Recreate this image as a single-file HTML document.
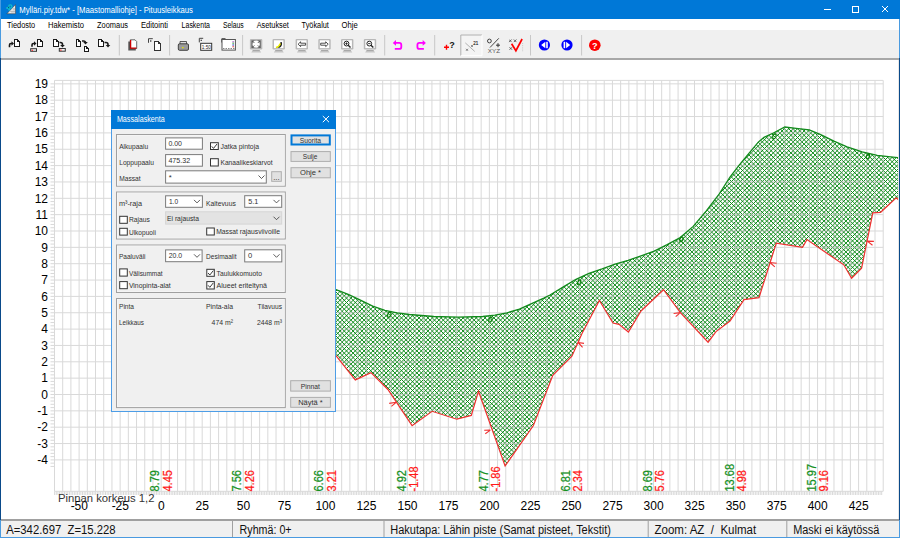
<!DOCTYPE html><html><head><meta charset="utf-8"><style>
html,body{margin:0;padding:0;width:900px;height:538px;overflow:hidden;background:#fff}
svg{display:block;font-family:"Liberation Sans", sans-serif}
</style></head><body>
<svg width="900" height="538" viewBox="0 0 900 538">
<defs>

<clipPath id="chartclip"><rect x="1" y="60" width="897" height="459"/></clipPath>
</defs>

<rect x="0" y="0" width="900" height="538" fill="#ffffff"/>
<rect x="0" y="0" width="900" height="19" fill="#0078d7"/>
<rect x="0" y="19" width="900" height="11" fill="#ffffff"/>
<rect x="0" y="30" width="900" height="28" fill="#f0f0f0"/>
<rect x="0" y="58" width="900" height="2" fill="#a8a8a8"/>
<rect x="0" y="519" width="900" height="2" fill="#a0a0a0"/>
<rect x="0" y="521" width="900" height="16" fill="#f0f0f0"/>
<rect x="0" y="537" width="900" height="1" fill="#4a9ae0"/>
<rect x="0" y="0" width="1" height="58" fill="#4a9be0"/>
<rect x="0" y="58" width="1" height="462" fill="#0a4a8a"/>
<rect x="0" y="520" width="1" height="18" fill="#4a9be0"/>
<rect x="899" y="19" width="1" height="39" fill="#4a9be0"/>
<rect x="899" y="58" width="1" height="462" fill="#0a4a8a"/>
<rect x="899" y="520" width="1" height="18" fill="#4a9be0"/>
<rect x="898" y="60" width="1" height="459" fill="#e8e8e8"/>
<path d="M6.9 13.7 L15.5 4.6 L15.5 13.7 Z" fill="#ececec" stroke="#333" stroke-width="0.5"/><path d="M10 11.5 H15 M12.5 9 H15 M12 13.5 V10.5 M14 13.5 V8" stroke="#999" stroke-width="0.5"/>
<circle cx="10.3" cy="6.5" r="1.6" fill="none" stroke="#12c0c8" stroke-width="1.2"/><circle cx="7.3" cy="8" r="1.1" fill="#12c0c8"/><circle cx="9.2" cy="9.6" r="1.1" fill="#12c0c8"/><circle cx="8.6" cy="7.4" r="0.6" fill="#0a5a70"/>
<text x="19.3" y="12.8" font-size="8.8" fill="#ffffff" text-anchor="start" textLength="173.6" lengthAdjust="spacingAndGlyphs">Mylläri.piy.tdw* - [Maastomalliohje] - Pituusleikkaus</text>
<rect x="824" y="9" width="7" height="1" fill="#ffffff"/>
<rect x="852.5" y="6.5" width="6" height="6" fill="none" stroke="#ffffff" stroke-width="1"/>
<path d="M882 6 L888 12 M888 6 L882 12" stroke="#fff" stroke-width="1"/>
<text x="7.0" y="28.4" font-size="8.9" fill="#000" text-anchor="start" textLength="28.2" lengthAdjust="spacingAndGlyphs">Tiedosto</text>
<text x="48.0" y="28.4" font-size="8.9" fill="#000" text-anchor="start" textLength="36.0" lengthAdjust="spacingAndGlyphs">Hakemisto</text>
<text x="97.0" y="28.4" font-size="8.9" fill="#000" text-anchor="start" textLength="31.0" lengthAdjust="spacingAndGlyphs">Zoomaus</text>
<text x="141.0" y="28.4" font-size="8.9" fill="#000" text-anchor="start" textLength="27.0" lengthAdjust="spacingAndGlyphs">Editointi</text>
<text x="181.6" y="28.4" font-size="8.9" fill="#000" text-anchor="start" textLength="28.4" lengthAdjust="spacingAndGlyphs">Laskenta</text>
<text x="222.9" y="28.4" font-size="8.9" fill="#000" text-anchor="start" textLength="20.9" lengthAdjust="spacingAndGlyphs">Selaus</text>
<text x="256.7" y="28.4" font-size="8.9" fill="#000" text-anchor="start" textLength="32.2" lengthAdjust="spacingAndGlyphs">Asetukset</text>
<text x="301.6" y="28.4" font-size="8.9" fill="#000" text-anchor="start" textLength="27.3" lengthAdjust="spacingAndGlyphs">Työkalut</text>
<text x="341.6" y="28.4" font-size="8.9" fill="#000" text-anchor="start" textLength="16.2" lengthAdjust="spacingAndGlyphs">Ohje</text>
<rect x="118.8" y="35" width="1" height="20.5" fill="#c8c8c8"/>
<rect x="169.1" y="35" width="1" height="20.5" fill="#c8c8c8"/>
<rect x="242.1" y="35" width="1" height="20.5" fill="#c8c8c8"/>
<rect x="384.2" y="35" width="1" height="20.5" fill="#c8c8c8"/>
<rect x="434.2" y="35" width="1" height="20.5" fill="#c8c8c8"/>
<rect x="530.0" y="35" width="1" height="20.5" fill="#c8c8c8"/>
<rect x="581.1" y="35" width="1" height="20.5" fill="#c8c8c8"/>
<path d="M9.5 47.2 V45.0 Q9.5 43.5 11.0 43.5 H12" stroke="#1a1a1a" stroke-width="1.6" fill="none"/>
<path d="M11.5 41.3 L14 43.5 L11.5 45.7 Z" fill="#1a1a1a"/>
<path d="M14.5 39.5 H17.5 L19.5 41.5 V46.5 H14.5 Z" fill="#ffffff" stroke="#1a1a1a" stroke-width="1" shape-rendering="crispEdges"/><path d="M17.5 39.5 V41.5 H19.5" stroke="#1a1a1a" stroke-width="1" fill="none" shape-rendering="crispEdges"/>
<path d="M32 46.8 V45.0 Q32 43.5 33.5 43.5 H34.5" stroke="#1a1a1a" stroke-width="1.6" fill="none"/>
<path d="M34.0 41.3 L36.5 43.5 L34.0 45.7 Z" fill="#1a1a1a"/>
<path d="M37.5 39.5 H40.5 L42.5 41.5 V46.5 H37.5 Z" fill="#ffffff" stroke="#1a1a1a" stroke-width="1" shape-rendering="crispEdges"/><path d="M40.5 39.5 V41.5 H42.5" stroke="#1a1a1a" stroke-width="1" fill="none" shape-rendering="crispEdges"/>
<rect x="30.7" y="48.7" width="5.800000000000001" height="2.5999999999999943" fill="#f4f4f4" stroke="#333" stroke-width="1"/>
<rect x="31.7" y="49.7" width="1.2" height="1.2" fill="#ff2020"/>
<path d="M53.5 39.5 H56.5 L58.5 41.5 V46.5 H53.5 Z" fill="#ffffff" stroke="#1a1a1a" stroke-width="1" shape-rendering="crispEdges"/><path d="M56.5 39.5 V41.5 H58.5" stroke="#1a1a1a" stroke-width="1" fill="none" shape-rendering="crispEdges"/>
<path d="M59.5 42.5 H60.5 Q62.5 42.5 62.5 44.5 V45.5" stroke="#1a1a1a" stroke-width="1.6" fill="none"/>
<path d="M60.2 45.0 L62.5 47.5 L64.8 45.0 Z" fill="#1a1a1a"/>
<rect x="59.3" y="48.5" width="6.0" height="2.700000000000003" fill="#f4f4f4" stroke="#333" stroke-width="1"/>
<rect x="60.3" y="49.5" width="1.2" height="1.2" fill="#ff2020"/>
<path d="M76.5 39.5 H78.5 L80.5 41.5 V46.5 H76.5 Z" fill="#ffffff" stroke="#1a1a1a" stroke-width="1" shape-rendering="crispEdges"/><path d="M78.5 39.5 V41.5 H80.5" stroke="#1a1a1a" stroke-width="1" fill="none" shape-rendering="crispEdges"/>
<path d="M82 41 H83.5 Q85.5 41 85.5 43 V42.5" stroke="#1a1a1a" stroke-width="1.6" fill="none"/>
<path d="M83.2 42.0 L85.5 44.5 L87.8 42.0 Z" fill="#1a1a1a"/>
<path d="M84.5 46.5 H86.5 L88.5 48.5 V51.5 H84.5 Z" fill="#ffffff" stroke="#1a1a1a" stroke-width="1" shape-rendering="crispEdges"/><path d="M86.5 46.5 V48.5 H88.5" stroke="#1a1a1a" stroke-width="1" fill="none" shape-rendering="crispEdges"/>
<path d="M98.5 39.5 H101.5 L103.5 41.5 V46.5 H98.5 Z" fill="#ffffff" stroke="#1a1a1a" stroke-width="1" shape-rendering="crispEdges"/><path d="M101.5 39.5 V41.5 H103.5" stroke="#1a1a1a" stroke-width="1" fill="none" shape-rendering="crispEdges"/>
<path d="M104.5 42.5 H106 Q108 42.5 108 44.5 V45.5" stroke="#1a1a1a" stroke-width="1.6" fill="none"/>
<path d="M105.7 45.0 L108 47.5 L110.3 45.0 Z" fill="#1a1a1a"/>
<rect x="128.3" y="41.5" width="7.5" height="9" fill="#555"/>
<path d="M130.3 39.8 H135 L136.7 41.5 V48.5 H130.3 Z" fill="#fff" stroke="#444" stroke-width="0.8"/>
<path d="M130.6 40 V48.2 H136.5" stroke="#cc0000" stroke-width="1.3" fill="none"/>
<path d="M148.5 42.8 V38.7 H152.8" stroke="#444" stroke-width="1" fill="none"/><rect x="150" y="40.3" width="1.4" height="1.4" fill="#444"/>
<path d="M154.5 41.5 H158.5 L160.5 43.5 V50.5 H154.5 Z" fill="#fff" stroke="#333" stroke-width="1" shape-rendering="crispEdges"/><path d="M158.5 41.5 V43.5 H160.5" stroke="#333" stroke-width="1" fill="none" shape-rendering="crispEdges"/>
<path d="M180 44 V41.5 H186.5 V44" fill="#ddd" stroke="#333" stroke-width="0.8"/>
<path d="M178.3 45 Q178.3 43.8 179.5 43.8 H187.3 Q188.5 43.8 188.5 45 V49 Q188.5 50.3 187.2 50.3 H179.5 Q178.3 50.3 178.3 49 Z" fill="#9a9a9a" stroke="#333" stroke-width="0.9"/>
<rect x="182" y="47" width="1.6" height="1.2" fill="#e0e000"/>
<path d="M199.3 42.4 V38.3 H203.2" stroke="#444" stroke-width="1" fill="none"/><rect x="200.6" y="39.7" width="1.3" height="1.3" fill="#444"/>
<rect x="200.7" y="43.3" width="11" height="7" fill="#fff" stroke="#333" stroke-width="1"/>
<text x="201.8" y="49.3" font-size="5.6" fill="#222" textLength="9" lengthAdjust="spacingAndGlyphs">1:50</text>
<path d="M221.8 42.5 V38.7 H225.5" stroke="#444" stroke-width="1" fill="none"/><rect x="223" y="40" width="1.4" height="1.4" fill="#444"/>
<rect x="222" y="39.5" width="13.4" height="10.6" fill="#fff" stroke="#555" stroke-width="1"/>
<rect x="232.6" y="41" width="1" height="1.6" fill="#a040c0"/><rect x="232.6" y="42.6" width="1" height="1.6" fill="#20a020"/><rect x="232.6" y="44.2" width="1" height="1.6" fill="#2040e0"/><rect x="232.6" y="45.8" width="1" height="1.6" fill="#e02020"/>
<path d="M223 48.5 H235" stroke="#888" stroke-width="1" stroke-dasharray="1.5 1"/>
<rect x="249.9" y="38.9" width="12.4" height="10.6" rx="1.2" fill="#b8b8b8"/>
<rect x="251.4" y="40.3" width="9.4" height="7.8" fill="#6a6a6a"/>
<path d="M251.2 52.6 H261.2 L259.7 50.2 H252.7 Z" fill="#c4c4c4"/><rect x="252.7" y="50" width="7" height="1" fill="#a8a8a8"/>
<circle cx="256.1" cy="44.2" r="3.6" fill="#fff"/><path d="M252.4 41 l2 2 M259.8 41 l-2 2 M252.4 47.4 l2 -2 M259.8 47.4 l-2 -2" stroke="#555" stroke-width="0.9"/>
<rect x="272.5" y="38.9" width="12.4" height="10.6" rx="1.2" fill="#b8b8b8"/>
<rect x="274.0" y="40.3" width="9.4" height="7.8" fill="#ffffff"/>
<path d="M273.8 52.6 H283.8 L282.3 50.2 H275.3 Z" fill="#c4c4c4"/><rect x="275.3" y="50" width="7" height="1" fill="#a8a8a8"/>
<path d="M275.5 47.8 Q279 47.8 280 44.5 L280.5 42 L282 42.3 Q282.5 46.5 279.5 47.8 Z" fill="#222"/><path d="M276 47.5 Q279 47 280.4 43.5" stroke="#e8e800" stroke-width="1.5" fill="none"/>
<rect x="295.6" y="38.9" width="12.4" height="10.6" rx="1.2" fill="#b8b8b8"/>
<rect x="297.1" y="40.3" width="9.4" height="7.8" fill="#ffffff"/>
<path d="M296.9 52.6 H306.9 L305.4 50.2 H298.4 Z" fill="#c4c4c4"/><rect x="298.4" y="50" width="7" height="1" fill="#a8a8a8"/>
<path d="M298.1 44.2 L300.6 41.8 V43.2 H305.6 V45.2 H300.6 V46.6 Z" fill="#fff" stroke="#222" stroke-width="0.8"/>
<rect x="318.3" y="38.9" width="12.4" height="10.6" rx="1.2" fill="#b8b8b8"/>
<rect x="319.8" y="40.3" width="9.4" height="7.8" fill="#ffffff"/>
<path d="M319.6 52.6 H329.6 L328.1 50.2 H321.1 Z" fill="#c4c4c4"/><rect x="321.1" y="50" width="7" height="1" fill="#a8a8a8"/>
<path d="M328.2 44.2 L325.7 41.8 V43.2 H320.7 V45.2 H325.7 V46.6 Z" fill="#fff" stroke="#222" stroke-width="0.8"/>
<rect x="341.0" y="38.9" width="12.4" height="10.6" rx="1.2" fill="#b8b8b8"/>
<rect x="342.5" y="40.3" width="9.4" height="7.8" fill="#ffffff"/>
<path d="M342.3 52.6 H352.3 L350.8 50.2 H343.8 Z" fill="#c4c4c4"/><rect x="343.8" y="50" width="7" height="1" fill="#a8a8a8"/>
<circle cx="346.5" cy="43.6" r="2.4" fill="#fff" stroke="#222" stroke-width="1"/><path d="M348.2 45.3 L350.5 47.6" stroke="#222" stroke-width="1.4"/><path d="M345.3 43.6 H347.7 M346.5 42.4 V44.8" stroke="#222" stroke-width="0.9"/>
<rect x="363.8" y="38.9" width="12.4" height="10.6" rx="1.2" fill="#b8b8b8"/>
<rect x="365.3" y="40.3" width="9.4" height="7.8" fill="#ffffff"/>
<path d="M365.1 52.6 H375.1 L373.6 50.2 H366.6 Z" fill="#c4c4c4"/><rect x="366.6" y="50" width="7" height="1" fill="#a8a8a8"/>
<circle cx="369.3" cy="43.6" r="2.4" fill="#fff" stroke="#222" stroke-width="1"/><path d="M371.0 45.3 L373.3 47.6" stroke="#222" stroke-width="1.4"/><path d="M368.1 43.6 H370.5" stroke="#222" stroke-width="0.9"/>
<path d="M395 42.9 H399.3 Q401.3 42.9 401.3 44.9 V46.9 Q401.3 48.9 399.3 48.9 H394.8" stroke="#ff00ff" stroke-width="1.8" fill="none"/><path d="M392.8 42.9 L396 40 V45.8 Z" fill="#ff00ff"/>
<path d="M423.7 42.9 H419.4 Q417.4 42.9 417.4 44.9 V46.9 Q417.4 48.9 419.4 48.9 H423.9" stroke="#ff00ff" stroke-width="1.8" fill="none"/><path d="M425.9 42.9 L422.7 40 V45.8 Z" fill="#ff00ff"/>
<path d="M444 47.3 H449 M446.5 44.8 V49.8" stroke="#ff0000" stroke-width="1.4"/>
<text x="449.2" y="47.8" font-size="9" font-weight="bold" fill="#111">?</text>
<rect x="460.3" y="34.5" width="21.7" height="21.2" fill="#f4f4f4"/><path d="M460.8 55.7 V35 H482" stroke="#b0b0b0" stroke-width="1" fill="none"/><path d="M482 35 V55.7 H460.8" stroke="#ffffff" stroke-width="1" fill="none"/>
<path d="M465.3 42.9 L474.7 51.4" stroke="#a0a0a0" stroke-width="0.8"/><path d="M466 48.8 l2 2 M468 48.8 l-2 2" stroke="#555" stroke-width="0.7"/><rect x="471.3" y="45.3" width="1.4" height="1.4" fill="#333"/><text x="473.2" y="44.5" font-size="5.6" fill="#222" stroke="#222" stroke-width="0.15" textLength="5" lengthAdjust="spacingAndGlyphs">21</text>
<circle cx="489.4" cy="41" r="1.9" fill="none" stroke="#333" stroke-width="0.9"/><path d="M490 47.5 L498.8 38.3" stroke="#333" stroke-width="0.9"/><path d="M496 45.2 H500 M498 43.2 V47.2" stroke="#333" stroke-width="1"/>
<text x="487.8" y="52.6" font-size="4.8" fill="#555" textLength="12.2" lengthAdjust="spacingAndGlyphs">XYZ</text>
<path d="M509 39.5 l2.6 2.6 M511.6 39.5 l-2.6 2.6 M513.8 39.5 l2.6 2.6 M516.4 39.5 l-2.6 2.6 M509.5 47.2 l2.6 2.6 M512.1 47.2 l-2.6 2.6" stroke="#444" stroke-width="0.8"/>
<path d="M511.6 43.7 L515.9 50.7 L522.1 39" stroke="#ff0000" stroke-width="1.7" fill="none"/><path d="M522.6 43 V52" stroke="#bbb" stroke-width="0.8" stroke-dasharray="1 1.2"/>
<circle cx="544.4" cy="45" r="5.6" fill="#0000ff"/><path d="M541.2 45 L545.3 41.8 V48.2 Z" fill="#fff"/><rect x="546.2" y="41.8" width="1.6" height="6.4" fill="#fff"/>
<circle cx="567" cy="45" r="5.6" fill="#0000ff"/><path d="M570.2 45 L566.1 41.8 V48.2 Z" fill="#fff"/><rect x="563.6" y="41.8" width="1.6" height="6.4" fill="#fff"/>
<circle cx="594.8" cy="45.2" r="5.8" fill="#ff0000"/><text x="594.8" y="48.8" font-size="9" font-weight="bold" fill="#fff" text-anchor="middle">?</text>
<g clip-path="url(#chartclip)">
<path d="M54.50 80.4V491.3M62.70 80.4V491.3M70.91 80.4V491.3M79.12 80.4V491.3M87.32 80.4V491.3M95.53 80.4V491.3M103.73 80.4V491.3M111.94 80.4V491.3M120.14 80.4V491.3M128.34 80.4V491.3M136.55 80.4V491.3M144.75 80.4V491.3M152.96 80.4V491.3M161.17 80.4V491.3M169.37 80.4V491.3M177.57 80.4V491.3M185.78 80.4V491.3M193.99 80.4V491.3M202.19 80.4V491.3M210.40 80.4V491.3M218.60 80.4V491.3M226.81 80.4V491.3M235.01 80.4V491.3M243.22 80.4V491.3M251.42 80.4V491.3M259.62 80.4V491.3M267.83 80.4V491.3M276.03 80.4V491.3M284.24 80.4V491.3M292.44 80.4V491.3M300.65 80.4V491.3M308.86 80.4V491.3M317.06 80.4V491.3M325.26 80.4V491.3M333.47 80.4V491.3M341.68 80.4V491.3M349.88 80.4V491.3M358.08 80.4V491.3M366.29 80.4V491.3M374.50 80.4V491.3M382.70 80.4V491.3M390.91 80.4V491.3M399.11 80.4V491.3M407.31 80.4V491.3M415.52 80.4V491.3M423.73 80.4V491.3M431.93 80.4V491.3M440.13 80.4V491.3M448.34 80.4V491.3M456.55 80.4V491.3M464.75 80.4V491.3M472.95 80.4V491.3M481.16 80.4V491.3M489.37 80.4V491.3M497.57 80.4V491.3M505.77 80.4V491.3M513.98 80.4V491.3M522.18 80.4V491.3M530.39 80.4V491.3M538.60 80.4V491.3M546.80 80.4V491.3M555.00 80.4V491.3M563.21 80.4V491.3M571.41 80.4V491.3M579.62 80.4V491.3M587.83 80.4V491.3M596.03 80.4V491.3M604.24 80.4V491.3M612.44 80.4V491.3M620.64 80.4V491.3M628.85 80.4V491.3M637.05 80.4V491.3M645.26 80.4V491.3M653.47 80.4V491.3M661.67 80.4V491.3M669.88 80.4V491.3M678.08 80.4V491.3M686.28 80.4V491.3M694.49 80.4V491.3M702.70 80.4V491.3M710.90 80.4V491.3M719.11 80.4V491.3M727.31 80.4V491.3M735.51 80.4V491.3M743.72 80.4V491.3M751.92 80.4V491.3M760.13 80.4V491.3M768.34 80.4V491.3M776.54 80.4V491.3M784.75 80.4V491.3M792.95 80.4V491.3M801.15 80.4V491.3M809.36 80.4V491.3M817.57 80.4V491.3M825.77 80.4V491.3M833.98 80.4V491.3M842.18 80.4V491.3M850.38 80.4V491.3M858.59 80.4V491.3M866.79 80.4V491.3M875.00 80.4V491.3M883.21 80.4V491.3M54.5 459.90H883.2M54.5 443.55H883.2M54.5 427.20H883.2M54.5 410.85H883.2M54.5 394.50H883.2M54.5 378.15H883.2M54.5 361.80H883.2M54.5 345.45H883.2M54.5 329.10H883.2M54.5 312.75H883.2M54.5 296.40H883.2M54.5 280.05H883.2M54.5 263.70H883.2M54.5 247.35H883.2M54.5 231.00H883.2M54.5 214.65H883.2M54.5 198.30H883.2M54.5 181.95H883.2M54.5 165.60H883.2M54.5 149.25H883.2M54.5 132.90H883.2M54.5 116.55H883.2M54.5 100.20H883.2M54.5 83.85H883.2M54.5 80.4H883.2M54.5 491.3H883.2" stroke="#d9d9d9" stroke-width="1" fill="none"/>
<path d="M50.5 83.85H54.5M50.5 87.12H54.5M50.5 90.39H54.5M50.5 93.66H54.5M50.5 96.93H54.5M50.5 100.20H54.5M50.5 103.47H54.5M50.5 106.74H54.5M50.5 110.01H54.5M50.5 113.28H54.5M50.5 116.55H54.5M50.5 119.82H54.5M50.5 123.09H54.5M50.5 126.36H54.5M50.5 129.63H54.5M50.5 132.90H54.5M50.5 136.17H54.5M50.5 139.44H54.5M50.5 142.71H54.5M50.5 145.98H54.5M50.5 149.25H54.5M50.5 152.52H54.5M50.5 155.79H54.5M50.5 159.06H54.5M50.5 162.33H54.5M50.5 165.60H54.5M50.5 168.87H54.5M50.5 172.14H54.5M50.5 175.41H54.5M50.5 178.68H54.5M50.5 181.95H54.5M50.5 185.22H54.5M50.5 188.49H54.5M50.5 191.76H54.5M50.5 195.03H54.5M50.5 198.30H54.5M50.5 201.57H54.5M50.5 204.84H54.5M50.5 208.11H54.5M50.5 211.38H54.5M50.5 214.65H54.5M50.5 217.92H54.5M50.5 221.19H54.5M50.5 224.46H54.5M50.5 227.73H54.5M50.5 231.00H54.5M50.5 234.27H54.5M50.5 237.54H54.5M50.5 240.81H54.5M50.5 244.08H54.5M50.5 247.35H54.5M50.5 250.62H54.5M50.5 253.89H54.5M50.5 257.16H54.5M50.5 260.43H54.5M50.5 263.70H54.5M50.5 266.97H54.5M50.5 270.24H54.5M50.5 273.51H54.5M50.5 276.78H54.5M50.5 280.05H54.5M50.5 283.32H54.5M50.5 286.59H54.5M50.5 289.86H54.5M50.5 293.13H54.5M50.5 296.40H54.5M50.5 299.67H54.5M50.5 302.94H54.5M50.5 306.21H54.5M50.5 309.48H54.5M50.5 312.75H54.5M50.5 316.02H54.5M50.5 319.29H54.5M50.5 322.56H54.5M50.5 325.83H54.5M50.5 329.10H54.5M50.5 332.37H54.5M50.5 335.64H54.5M50.5 338.91H54.5M50.5 342.18H54.5M50.5 345.45H54.5M50.5 348.72H54.5M50.5 351.99H54.5M50.5 355.26H54.5M50.5 358.53H54.5M50.5 361.80H54.5M50.5 365.07H54.5M50.5 368.34H54.5M50.5 371.61H54.5M50.5 374.88H54.5M50.5 378.15H54.5M50.5 381.42H54.5M50.5 384.69H54.5M50.5 387.96H54.5M50.5 391.23H54.5M50.5 394.50H54.5M50.5 397.77H54.5M50.5 401.04H54.5M50.5 404.31H54.5M50.5 407.58H54.5M50.5 410.85H54.5M50.5 414.12H54.5M50.5 417.39H54.5M50.5 420.66H54.5M50.5 423.93H54.5M50.5 427.20H54.5M50.5 430.47H54.5M50.5 433.74H54.5M50.5 437.01H54.5M50.5 440.28H54.5M50.5 443.55H54.5M50.5 446.82H54.5M50.5 450.09H54.5M50.5 453.36H54.5M50.5 456.63H54.5M50.5 459.90H54.5M50.5 463.17H54.5M50.5 466.44H54.5M54.64 491.3V495M56.28 491.3V495M57.92 491.3V495M59.56 491.3V495M61.20 491.3V495M62.84 491.3V495M64.48 491.3V495M66.12 491.3V495M67.76 491.3V495M69.40 491.3V495M71.05 491.3V495M72.69 491.3V495M74.33 491.3V495M75.97 491.3V495M77.61 491.3V495M79.25 491.3V495M80.89 491.3V495M82.53 491.3V495M84.17 491.3V495M85.81 491.3V495M87.46 491.3V495M89.10 491.3V495M90.74 491.3V495M92.38 491.3V495M94.02 491.3V495M95.66 491.3V495M97.30 491.3V495M98.94 491.3V495M100.58 491.3V495M102.22 491.3V495M103.87 491.3V495M105.51 491.3V495M107.15 491.3V495M108.79 491.3V495M110.43 491.3V495M112.07 491.3V495M113.71 491.3V495M115.35 491.3V495M116.99 491.3V495M118.63 491.3V495M120.28 491.3V495M121.92 491.3V495M123.56 491.3V495M125.20 491.3V495M126.84 491.3V495M128.48 491.3V495M130.12 491.3V495M131.76 491.3V495M133.40 491.3V495M135.04 491.3V495M136.69 491.3V495M138.33 491.3V495M139.97 491.3V495M141.61 491.3V495M143.25 491.3V495M144.89 491.3V495M146.53 491.3V495M148.17 491.3V495M149.81 491.3V495M151.45 491.3V495M153.09 491.3V495M154.74 491.3V495M156.38 491.3V495M158.02 491.3V495M159.66 491.3V495M161.30 491.3V495M162.94 491.3V495M164.58 491.3V495M166.22 491.3V495M167.86 491.3V495M169.51 491.3V495M171.15 491.3V495M172.79 491.3V495M174.43 491.3V495M176.07 491.3V495M177.71 491.3V495M179.35 491.3V495M180.99 491.3V495M182.63 491.3V495M184.27 491.3V495M185.92 491.3V495M187.56 491.3V495M189.20 491.3V495M190.84 491.3V495M192.48 491.3V495M194.12 491.3V495M195.76 491.3V495M197.40 491.3V495M199.04 491.3V495M200.68 491.3V495M202.33 491.3V495M203.97 491.3V495M205.61 491.3V495M207.25 491.3V495M208.89 491.3V495M210.53 491.3V495M212.17 491.3V495M213.81 491.3V495M215.45 491.3V495M217.09 491.3V495M218.74 491.3V495M220.38 491.3V495M222.02 491.3V495M223.66 491.3V495M225.30 491.3V495M226.94 491.3V495M228.58 491.3V495M230.22 491.3V495M231.86 491.3V495M233.50 491.3V495M235.15 491.3V495M236.79 491.3V495M238.43 491.3V495M240.07 491.3V495M241.71 491.3V495M243.35 491.3V495M244.99 491.3V495M246.63 491.3V495M248.27 491.3V495M249.91 491.3V495M251.56 491.3V495M253.20 491.3V495M254.84 491.3V495M256.48 491.3V495M258.12 491.3V495M259.76 491.3V495M261.40 491.3V495M263.04 491.3V495M264.68 491.3V495M266.32 491.3V495M267.97 491.3V495M269.61 491.3V495M271.25 491.3V495M272.89 491.3V495M274.53 491.3V495M276.17 491.3V495M277.81 491.3V495M279.45 491.3V495M281.09 491.3V495M282.73 491.3V495M284.38 491.3V495M286.02 491.3V495M287.66 491.3V495M289.30 491.3V495M290.94 491.3V495M292.58 491.3V495M294.22 491.3V495M295.86 491.3V495M297.50 491.3V495M299.14 491.3V495M300.79 491.3V495M302.43 491.3V495M304.07 491.3V495M305.71 491.3V495M307.35 491.3V495M308.99 491.3V495M310.63 491.3V495M312.27 491.3V495M313.91 491.3V495M315.55 491.3V495M317.20 491.3V495M318.84 491.3V495M320.48 491.3V495M322.12 491.3V495M323.76 491.3V495M325.40 491.3V495M327.04 491.3V495M328.68 491.3V495M330.32 491.3V495M331.96 491.3V495M333.61 491.3V495M335.25 491.3V495M336.89 491.3V495M338.53 491.3V495M340.17 491.3V495M341.81 491.3V495M343.45 491.3V495M345.09 491.3V495M346.73 491.3V495M348.37 491.3V495M350.01 491.3V495M351.66 491.3V495M353.30 491.3V495M354.94 491.3V495M356.58 491.3V495M358.22 491.3V495M359.86 491.3V495M361.50 491.3V495M363.14 491.3V495M364.78 491.3V495M366.43 491.3V495M368.07 491.3V495M369.71 491.3V495M371.35 491.3V495M372.99 491.3V495M374.63 491.3V495M376.27 491.3V495M377.91 491.3V495M379.55 491.3V495M381.19 491.3V495M382.84 491.3V495M384.48 491.3V495M386.12 491.3V495M387.76 491.3V495M389.40 491.3V495M391.04 491.3V495M392.68 491.3V495M394.32 491.3V495M395.96 491.3V495M397.60 491.3V495M399.25 491.3V495M400.89 491.3V495M402.53 491.3V495M404.17 491.3V495M405.81 491.3V495M407.45 491.3V495M409.09 491.3V495M410.73 491.3V495M412.37 491.3V495M414.01 491.3V495M415.65 491.3V495M417.30 491.3V495M418.94 491.3V495M420.58 491.3V495M422.22 491.3V495M423.86 491.3V495M425.50 491.3V495M427.14 491.3V495M428.78 491.3V495M430.42 491.3V495M432.06 491.3V495M433.71 491.3V495M435.35 491.3V495M436.99 491.3V495M438.63 491.3V495M440.27 491.3V495M441.91 491.3V495M443.55 491.3V495M445.19 491.3V495M446.83 491.3V495M448.48 491.3V495M450.12 491.3V495M451.76 491.3V495M453.40 491.3V495M455.04 491.3V495M456.68 491.3V495M458.32 491.3V495M459.96 491.3V495M461.60 491.3V495M463.24 491.3V495M464.88 491.3V495M466.53 491.3V495M468.17 491.3V495M469.81 491.3V495M471.45 491.3V495M473.09 491.3V495M474.73 491.3V495M476.37 491.3V495M478.01 491.3V495M479.65 491.3V495M481.30 491.3V495M482.94 491.3V495M484.58 491.3V495M486.22 491.3V495M487.86 491.3V495M489.50 491.3V495M491.14 491.3V495M492.78 491.3V495M494.42 491.3V495M496.06 491.3V495M497.71 491.3V495M499.35 491.3V495M500.99 491.3V495M502.63 491.3V495M504.27 491.3V495M505.91 491.3V495M507.55 491.3V495M509.19 491.3V495M510.83 491.3V495M512.47 491.3V495M514.12 491.3V495M515.76 491.3V495M517.40 491.3V495M519.04 491.3V495M520.68 491.3V495M522.32 491.3V495M523.96 491.3V495M525.60 491.3V495M527.24 491.3V495M528.88 491.3V495M530.53 491.3V495M532.17 491.3V495M533.81 491.3V495M535.45 491.3V495M537.09 491.3V495M538.73 491.3V495M540.37 491.3V495M542.01 491.3V495M543.65 491.3V495M545.29 491.3V495M546.93 491.3V495M548.58 491.3V495M550.22 491.3V495M551.86 491.3V495M553.50 491.3V495M555.14 491.3V495M556.78 491.3V495M558.42 491.3V495M560.06 491.3V495M561.70 491.3V495M563.35 491.3V495M564.99 491.3V495M566.63 491.3V495M568.27 491.3V495M569.91 491.3V495M571.55 491.3V495M573.19 491.3V495M574.83 491.3V495M576.47 491.3V495M578.11 491.3V495M579.75 491.3V495M581.40 491.3V495M583.04 491.3V495M584.68 491.3V495M586.32 491.3V495M587.96 491.3V495M589.60 491.3V495M591.24 491.3V495M592.88 491.3V495M594.52 491.3V495M596.16 491.3V495M597.81 491.3V495M599.45 491.3V495M601.09 491.3V495M602.73 491.3V495M604.37 491.3V495M606.01 491.3V495M607.65 491.3V495M609.29 491.3V495M610.93 491.3V495M612.58 491.3V495M614.22 491.3V495M615.86 491.3V495M617.50 491.3V495M619.14 491.3V495M620.78 491.3V495M622.42 491.3V495M624.06 491.3V495M625.70 491.3V495M627.34 491.3V495M628.99 491.3V495M630.63 491.3V495M632.27 491.3V495M633.91 491.3V495M635.55 491.3V495M637.19 491.3V495M638.83 491.3V495M640.47 491.3V495M642.11 491.3V495M643.75 491.3V495M645.39 491.3V495M647.04 491.3V495M648.68 491.3V495M650.32 491.3V495M651.96 491.3V495M653.60 491.3V495M655.24 491.3V495M656.88 491.3V495M658.52 491.3V495M660.16 491.3V495M661.81 491.3V495M663.45 491.3V495M665.09 491.3V495M666.73 491.3V495M668.37 491.3V495M670.01 491.3V495M671.65 491.3V495M673.29 491.3V495M674.93 491.3V495M676.57 491.3V495M678.21 491.3V495M679.86 491.3V495M681.50 491.3V495M683.14 491.3V495M684.78 491.3V495M686.42 491.3V495M688.06 491.3V495M689.70 491.3V495M691.34 491.3V495M692.98 491.3V495M694.62 491.3V495M696.27 491.3V495M697.91 491.3V495M699.55 491.3V495M701.19 491.3V495M702.83 491.3V495M704.47 491.3V495M706.11 491.3V495M707.75 491.3V495M709.39 491.3V495M711.04 491.3V495M712.68 491.3V495M714.32 491.3V495M715.96 491.3V495M717.60 491.3V495M719.24 491.3V495M720.88 491.3V495M722.52 491.3V495M724.16 491.3V495M725.80 491.3V495M727.44 491.3V495M729.09 491.3V495M730.73 491.3V495M732.37 491.3V495M734.01 491.3V495M735.65 491.3V495M737.29 491.3V495M738.93 491.3V495M740.57 491.3V495M742.21 491.3V495M743.86 491.3V495M745.50 491.3V495M747.14 491.3V495M748.78 491.3V495M750.42 491.3V495M752.06 491.3V495M753.70 491.3V495M755.34 491.3V495M756.98 491.3V495M758.62 491.3V495M760.27 491.3V495M761.91 491.3V495M763.55 491.3V495M765.19 491.3V495M766.83 491.3V495M768.47 491.3V495M770.11 491.3V495M771.75 491.3V495M773.39 491.3V495M775.03 491.3V495M776.67 491.3V495M778.32 491.3V495M779.96 491.3V495M781.60 491.3V495M783.24 491.3V495M784.88 491.3V495M786.52 491.3V495M788.16 491.3V495M789.80 491.3V495M791.44 491.3V495M793.09 491.3V495M794.73 491.3V495M796.37 491.3V495M798.01 491.3V495M799.65 491.3V495M801.29 491.3V495M802.93 491.3V495M804.57 491.3V495M806.21 491.3V495M807.85 491.3V495M809.50 491.3V495M811.14 491.3V495M812.78 491.3V495M814.42 491.3V495M816.06 491.3V495M817.70 491.3V495M819.34 491.3V495M820.98 491.3V495M822.62 491.3V495M824.26 491.3V495M825.90 491.3V495M827.55 491.3V495M829.19 491.3V495M830.83 491.3V495M832.47 491.3V495M834.11 491.3V495M835.75 491.3V495M837.39 491.3V495M839.03 491.3V495M840.67 491.3V495M842.32 491.3V495M843.96 491.3V495M845.60 491.3V495M847.24 491.3V495M848.88 491.3V495M850.52 491.3V495M852.16 491.3V495M853.80 491.3V495M855.44 491.3V495M857.08 491.3V495M858.72 491.3V495M860.37 491.3V495M862.01 491.3V495M863.65 491.3V495M865.29 491.3V495M866.93 491.3V495M868.57 491.3V495M870.21 491.3V495M871.85 491.3V495M873.49 491.3V495M875.13 491.3V495M876.78 491.3V495M878.42 491.3V495M880.06 491.3V495M881.70 491.3V495" stroke="#d9d9d9" stroke-width="1" fill="none"/>
<clipPath id="fillclip"><path d="M320,283.3 L336,289.6 L348.2,294.4 L360.4,300.1 L372.7,306.2 L384.9,310.3 L397.1,312.8 L409.3,314.5 L433.8,316.5 L458.2,317.2 L482.7,316.5 L494.9,315.2 L507.1,312.8 L519.4,309.1 L531.6,303.7 L543.8,298.1 L550,295 L563,287.1 L576,279.3 L589,273.3 L602.1,268.9 L615.1,264.2 L628.1,260.3 L641.1,255.8 L654.2,251.1 L667.2,244.6 L680.2,237.6 L693.2,226.4 L706.3,210.8 L719.3,193.9 L730,177 L739.4,164.8 L748.9,153.4 L758.3,142.1 L764,137.4 L773.4,133 L784.8,127 L796.1,128.3 L809.3,129.8 L820.7,134.6 L833.9,141.2 L847.1,146.8 L862.2,151.9 L877.3,155.3 L890.6,156.8 L900,157.8 L900,201.2 L896.2,197.8 L880.6,212.3 L872.8,212.8 L861.6,268.1 L851.6,278.2 L843.8,264.8 L806.9,239.6 L802.5,247.4 L776.3,243.1 L759,297.6 L744,299.6 L730,321 L716,331.6 L708.1,342.2 L680.4,312.6 L663.5,289.7 L641,311 L628.4,332 L619,324.4 L613,323 L599.4,300.4 L582,333.5 L571.9,356.2 L552.8,375.3 L533.4,425.5 L505.1,466 L478.5,391.2 L471.3,415.4 L456.8,419.2 L432.1,411.3 L412.1,425.7 L387.9,389.5 L371,372.6 L355.3,379.9 L336,355.7 L325.4,342 L310,322 Z"/></clipPath>
<path clip-path="url(#fillclip)" d="M-56.60 115L303.40 475M-52.20 115L307.80 475M-47.80 115L312.20 475M-43.40 115L316.60 475M-39.00 115L321.00 475M-34.60 115L325.40 475M-30.20 115L329.80 475M-25.80 115L334.20 475M-21.40 115L338.60 475M-17.00 115L343.00 475M-12.60 115L347.40 475M-8.20 115L351.80 475M-3.80 115L356.20 475M0.60 115L360.60 475M5.00 115L365.00 475M9.40 115L369.40 475M13.80 115L373.80 475M18.20 115L378.20 475M22.60 115L382.60 475M27.00 115L387.00 475M31.40 115L391.40 475M35.80 115L395.80 475M40.20 115L400.20 475M44.60 115L404.60 475M49.00 115L409.00 475M53.40 115L413.40 475M57.80 115L417.80 475M62.20 115L422.20 475M66.60 115L426.60 475M71.00 115L431.00 475M75.40 115L435.40 475M79.80 115L439.80 475M84.20 115L444.20 475M88.60 115L448.60 475M93.00 115L453.00 475M97.40 115L457.40 475M101.80 115L461.80 475M106.20 115L466.20 475M110.60 115L470.60 475M115.00 115L475.00 475M119.40 115L479.40 475M123.80 115L483.80 475M128.20 115L488.20 475M132.60 115L492.60 475M137.00 115L497.00 475M141.40 115L501.40 475M145.80 115L505.80 475M150.20 115L510.20 475M154.60 115L514.60 475M159.00 115L519.00 475M163.40 115L523.40 475M167.80 115L527.80 475M172.20 115L532.20 475M176.60 115L536.60 475M181.00 115L541.00 475M185.40 115L545.40 475M189.80 115L549.80 475M194.20 115L554.20 475M198.60 115L558.60 475M203.00 115L563.00 475M207.40 115L567.40 475M211.80 115L571.80 475M216.20 115L576.20 475M220.60 115L580.60 475M225.00 115L585.00 475M229.40 115L589.40 475M233.80 115L593.80 475M238.20 115L598.20 475M242.60 115L602.60 475M247.00 115L607.00 475M251.40 115L611.40 475M255.80 115L615.80 475M260.20 115L620.20 475M264.60 115L624.60 475M269.00 115L629.00 475M273.40 115L633.40 475M277.80 115L637.80 475M282.20 115L642.20 475M286.60 115L646.60 475M291.00 115L651.00 475M295.40 115L655.40 475M299.80 115L659.80 475M304.20 115L664.20 475M308.60 115L668.60 475M313.00 115L673.00 475M317.40 115L677.40 475M321.80 115L681.80 475M326.20 115L686.20 475M330.60 115L690.60 475M335.00 115L695.00 475M339.40 115L699.40 475M343.80 115L703.80 475M348.20 115L708.20 475M352.60 115L712.60 475M357.00 115L717.00 475M361.40 115L721.40 475M365.80 115L725.80 475M370.20 115L730.20 475M374.60 115L734.60 475M379.00 115L739.00 475M383.40 115L743.40 475M387.80 115L747.80 475M392.20 115L752.20 475M396.60 115L756.60 475M401.00 115L761.00 475M405.40 115L765.40 475M409.80 115L769.80 475M414.20 115L774.20 475M418.60 115L778.60 475M423.00 115L783.00 475M427.40 115L787.40 475M431.80 115L791.80 475M436.20 115L796.20 475M440.60 115L800.60 475M445.00 115L805.00 475M449.40 115L809.40 475M453.80 115L813.80 475M458.20 115L818.20 475M462.60 115L822.60 475M467.00 115L827.00 475M471.40 115L831.40 475M475.80 115L835.80 475M480.20 115L840.20 475M484.60 115L844.60 475M489.00 115L849.00 475M493.40 115L853.40 475M497.80 115L857.80 475M502.20 115L862.20 475M506.60 115L866.60 475M511.00 115L871.00 475M515.40 115L875.40 475M519.80 115L879.80 475M524.20 115L884.20 475M528.60 115L888.60 475M533.00 115L893.00 475M537.40 115L897.40 475M541.80 115L901.80 475M546.20 115L906.20 475M550.60 115L910.60 475M555.00 115L915.00 475M559.40 115L919.40 475M563.80 115L923.80 475M568.20 115L928.20 475M572.60 115L932.60 475M577.00 115L937.00 475M581.40 115L941.40 475M585.80 115L945.80 475M590.20 115L950.20 475M594.60 115L954.60 475M599.00 115L959.00 475M603.40 115L963.40 475M607.80 115L967.80 475M612.20 115L972.20 475M616.60 115L976.60 475M621.00 115L981.00 475M625.40 115L985.40 475M629.80 115L989.80 475M634.20 115L994.20 475M638.60 115L998.60 475M643.00 115L1003.00 475M647.40 115L1007.40 475M651.80 115L1011.80 475M656.20 115L1016.20 475M660.60 115L1020.60 475M665.00 115L1025.00 475M669.40 115L1029.40 475M673.80 115L1033.80 475M678.20 115L1038.20 475M682.60 115L1042.60 475M687.00 115L1047.00 475M691.40 115L1051.40 475M695.80 115L1055.80 475M700.20 115L1060.20 475M704.60 115L1064.60 475M709.00 115L1069.00 475M713.40 115L1073.40 475M717.80 115L1077.80 475M722.20 115L1082.20 475M726.60 115L1086.60 475M731.00 115L1091.00 475M735.40 115L1095.40 475M739.80 115L1099.80 475M744.20 115L1104.20 475M748.60 115L1108.60 475M753.00 115L1113.00 475M757.40 115L1117.40 475M761.80 115L1121.80 475M766.20 115L1126.20 475M770.60 115L1130.60 475M775.00 115L1135.00 475M779.40 115L1139.40 475M783.80 115L1143.80 475M788.20 115L1148.20 475M792.60 115L1152.60 475M797.00 115L1157.00 475M801.40 115L1161.40 475M805.80 115L1165.80 475M810.20 115L1170.20 475M814.60 115L1174.60 475M819.00 115L1179.00 475M823.40 115L1183.40 475M827.80 115L1187.80 475M832.20 115L1192.20 475M836.60 115L1196.60 475M841.00 115L1201.00 475M845.40 115L1205.40 475M849.80 115L1209.80 475M854.20 115L1214.20 475M858.60 115L1218.60 475M863.00 115L1223.00 475M867.40 115L1227.40 475M871.80 115L1231.80 475M876.20 115L1236.20 475M880.60 115L1240.60 475M885.00 115L1245.00 475M889.40 115L1249.40 475M893.80 115L1253.80 475M300.80 115L-59.20 475M305.20 115L-54.80 475M309.60 115L-50.40 475M314.00 115L-46.00 475M318.40 115L-41.60 475M322.80 115L-37.20 475M327.20 115L-32.80 475M331.60 115L-28.40 475M336.00 115L-24.00 475M340.40 115L-19.60 475M344.80 115L-15.20 475M349.20 115L-10.80 475M353.60 115L-6.40 475M358.00 115L-2.00 475M362.40 115L2.40 475M366.80 115L6.80 475M371.20 115L11.20 475M375.60 115L15.60 475M380.00 115L20.00 475M384.40 115L24.40 475M388.80 115L28.80 475M393.20 115L33.20 475M397.60 115L37.60 475M402.00 115L42.00 475M406.40 115L46.40 475M410.80 115L50.80 475M415.20 115L55.20 475M419.60 115L59.60 475M424.00 115L64.00 475M428.40 115L68.40 475M432.80 115L72.80 475M437.20 115L77.20 475M441.60 115L81.60 475M446.00 115L86.00 475M450.40 115L90.40 475M454.80 115L94.80 475M459.20 115L99.20 475M463.60 115L103.60 475M468.00 115L108.00 475M472.40 115L112.40 475M476.80 115L116.80 475M481.20 115L121.20 475M485.60 115L125.60 475M490.00 115L130.00 475M494.40 115L134.40 475M498.80 115L138.80 475M503.20 115L143.20 475M507.60 115L147.60 475M512.00 115L152.00 475M516.40 115L156.40 475M520.80 115L160.80 475M525.20 115L165.20 475M529.60 115L169.60 475M534.00 115L174.00 475M538.40 115L178.40 475M542.80 115L182.80 475M547.20 115L187.20 475M551.60 115L191.60 475M556.00 115L196.00 475M560.40 115L200.40 475M564.80 115L204.80 475M569.20 115L209.20 475M573.60 115L213.60 475M578.00 115L218.00 475M582.40 115L222.40 475M586.80 115L226.80 475M591.20 115L231.20 475M595.60 115L235.60 475M600.00 115L240.00 475M604.40 115L244.40 475M608.80 115L248.80 475M613.20 115L253.20 475M617.60 115L257.60 475M622.00 115L262.00 475M626.40 115L266.40 475M630.80 115L270.80 475M635.20 115L275.20 475M639.60 115L279.60 475M644.00 115L284.00 475M648.40 115L288.40 475M652.80 115L292.80 475M657.20 115L297.20 475M661.60 115L301.60 475M666.00 115L306.00 475M670.40 115L310.40 475M674.80 115L314.80 475M679.20 115L319.20 475M683.60 115L323.60 475M688.00 115L328.00 475M692.40 115L332.40 475M696.80 115L336.80 475M701.20 115L341.20 475M705.60 115L345.60 475M710.00 115L350.00 475M714.40 115L354.40 475M718.80 115L358.80 475M723.20 115L363.20 475M727.60 115L367.60 475M732.00 115L372.00 475M736.40 115L376.40 475M740.80 115L380.80 475M745.20 115L385.20 475M749.60 115L389.60 475M754.00 115L394.00 475M758.40 115L398.40 475M762.80 115L402.80 475M767.20 115L407.20 475M771.60 115L411.60 475M776.00 115L416.00 475M780.40 115L420.40 475M784.80 115L424.80 475M789.20 115L429.20 475M793.60 115L433.60 475M798.00 115L438.00 475M802.40 115L442.40 475M806.80 115L446.80 475M811.20 115L451.20 475M815.60 115L455.60 475M820.00 115L460.00 475M824.40 115L464.40 475M828.80 115L468.80 475M833.20 115L473.20 475M837.60 115L477.60 475M842.00 115L482.00 475M846.40 115L486.40 475M850.80 115L490.80 475M855.20 115L495.20 475M859.60 115L499.60 475M864.00 115L504.00 475M868.40 115L508.40 475M872.80 115L512.80 475M877.20 115L517.20 475M881.60 115L521.60 475M886.00 115L526.00 475M890.40 115L530.40 475M894.80 115L534.80 475M899.20 115L539.20 475M903.60 115L543.60 475M908.00 115L548.00 475M912.40 115L552.40 475M916.80 115L556.80 475M921.20 115L561.20 475M925.60 115L565.60 475M930.00 115L570.00 475M934.40 115L574.40 475M938.80 115L578.80 475M943.20 115L583.20 475M947.60 115L587.60 475M952.00 115L592.00 475M956.40 115L596.40 475M960.80 115L600.80 475M965.20 115L605.20 475M969.60 115L609.60 475M974.00 115L614.00 475M978.40 115L618.40 475M982.80 115L622.80 475M987.20 115L627.20 475M991.60 115L631.60 475M996.00 115L636.00 475M1000.40 115L640.40 475M1004.80 115L644.80 475M1009.20 115L649.20 475M1013.60 115L653.60 475M1018.00 115L658.00 475M1022.40 115L662.40 475M1026.80 115L666.80 475M1031.20 115L671.20 475M1035.60 115L675.60 475M1040.00 115L680.00 475M1044.40 115L684.40 475M1048.80 115L688.80 475M1053.20 115L693.20 475M1057.60 115L697.60 475M1062.00 115L702.00 475M1066.40 115L706.40 475M1070.80 115L710.80 475M1075.20 115L715.20 475M1079.60 115L719.60 475M1084.00 115L724.00 475M1088.40 115L728.40 475M1092.80 115L732.80 475M1097.20 115L737.20 475M1101.60 115L741.60 475M1106.00 115L746.00 475M1110.40 115L750.40 475M1114.80 115L754.80 475M1119.20 115L759.20 475M1123.60 115L763.60 475M1128.00 115L768.00 475M1132.40 115L772.40 475M1136.80 115L776.80 475M1141.20 115L781.20 475M1145.60 115L785.60 475M1150.00 115L790.00 475M1154.40 115L794.40 475M1158.80 115L798.80 475M1163.20 115L803.20 475M1167.60 115L807.60 475M1172.00 115L812.00 475M1176.40 115L816.40 475M1180.80 115L820.80 475M1185.20 115L825.20 475M1189.60 115L829.60 475M1194.00 115L834.00 475M1198.40 115L838.40 475M1202.80 115L842.80 475M1207.20 115L847.20 475M1211.60 115L851.60 475M1216.00 115L856.00 475M1220.40 115L860.40 475M1224.80 115L864.80 475M1229.20 115L869.20 475M1233.60 115L873.60 475M1238.00 115L878.00 475M1242.40 115L882.40 475M1246.80 115L886.80 475M1251.20 115L891.20 475M1255.60 115L895.60 475" stroke="#0c8a18" stroke-width="1.0" fill="none"/>
<path clip-path="url(#fillclip)" d="M54.50 80.4V491.3M62.70 80.4V491.3M70.91 80.4V491.3M79.12 80.4V491.3M87.32 80.4V491.3M95.53 80.4V491.3M103.73 80.4V491.3M111.94 80.4V491.3M120.14 80.4V491.3M128.34 80.4V491.3M136.55 80.4V491.3M144.75 80.4V491.3M152.96 80.4V491.3M161.17 80.4V491.3M169.37 80.4V491.3M177.57 80.4V491.3M185.78 80.4V491.3M193.99 80.4V491.3M202.19 80.4V491.3M210.40 80.4V491.3M218.60 80.4V491.3M226.81 80.4V491.3M235.01 80.4V491.3M243.22 80.4V491.3M251.42 80.4V491.3M259.62 80.4V491.3M267.83 80.4V491.3M276.03 80.4V491.3M284.24 80.4V491.3M292.44 80.4V491.3M300.65 80.4V491.3M308.86 80.4V491.3M317.06 80.4V491.3M325.26 80.4V491.3M333.47 80.4V491.3M341.68 80.4V491.3M349.88 80.4V491.3M358.08 80.4V491.3M366.29 80.4V491.3M374.50 80.4V491.3M382.70 80.4V491.3M390.91 80.4V491.3M399.11 80.4V491.3M407.31 80.4V491.3M415.52 80.4V491.3M423.73 80.4V491.3M431.93 80.4V491.3M440.13 80.4V491.3M448.34 80.4V491.3M456.55 80.4V491.3M464.75 80.4V491.3M472.95 80.4V491.3M481.16 80.4V491.3M489.37 80.4V491.3M497.57 80.4V491.3M505.77 80.4V491.3M513.98 80.4V491.3M522.18 80.4V491.3M530.39 80.4V491.3M538.60 80.4V491.3M546.80 80.4V491.3M555.00 80.4V491.3M563.21 80.4V491.3M571.41 80.4V491.3M579.62 80.4V491.3M587.83 80.4V491.3M596.03 80.4V491.3M604.24 80.4V491.3M612.44 80.4V491.3M620.64 80.4V491.3M628.85 80.4V491.3M637.05 80.4V491.3M645.26 80.4V491.3M653.47 80.4V491.3M661.67 80.4V491.3M669.88 80.4V491.3M678.08 80.4V491.3M686.28 80.4V491.3M694.49 80.4V491.3M702.70 80.4V491.3M710.90 80.4V491.3M719.11 80.4V491.3M727.31 80.4V491.3M735.51 80.4V491.3M743.72 80.4V491.3M751.92 80.4V491.3M760.13 80.4V491.3M768.34 80.4V491.3M776.54 80.4V491.3M784.75 80.4V491.3M792.95 80.4V491.3M801.15 80.4V491.3M809.36 80.4V491.3M817.57 80.4V491.3M825.77 80.4V491.3M833.98 80.4V491.3M842.18 80.4V491.3M850.38 80.4V491.3M858.59 80.4V491.3M866.79 80.4V491.3M875.00 80.4V491.3M883.21 80.4V491.3M54.5 459.90H883.2M54.5 443.55H883.2M54.5 427.20H883.2M54.5 410.85H883.2M54.5 394.50H883.2M54.5 378.15H883.2M54.5 361.80H883.2M54.5 345.45H883.2M54.5 329.10H883.2M54.5 312.75H883.2M54.5 296.40H883.2M54.5 280.05H883.2M54.5 263.70H883.2M54.5 247.35H883.2M54.5 231.00H883.2M54.5 214.65H883.2M54.5 198.30H883.2M54.5 181.95H883.2M54.5 165.60H883.2M54.5 149.25H883.2M54.5 132.90H883.2M54.5 116.55H883.2M54.5 100.20H883.2M54.5 83.85H883.2M54.5 80.4H883.2M54.5 491.3H883.2" stroke="#d0d0d0" stroke-width="1" fill="none" opacity="0.5"/>
<path d="M320,283.3 L336,289.6 L348.2,294.4 L360.4,300.1 L372.7,306.2 L384.9,310.3 L397.1,312.8 L409.3,314.5 L433.8,316.5 L458.2,317.2 L482.7,316.5 L494.9,315.2 L507.1,312.8 L519.4,309.1 L531.6,303.7 L543.8,298.1 L550,295 L563,287.1 L576,279.3 L589,273.3 L602.1,268.9 L615.1,264.2 L628.1,260.3 L641.1,255.8 L654.2,251.1 L667.2,244.6 L680.2,237.6 L693.2,226.4 L706.3,210.8 L719.3,193.9 L730,177 L739.4,164.8 L748.9,153.4 L758.3,142.1 L764,137.4 L773.4,133 L784.8,127 L796.1,128.3 L809.3,129.8 L820.7,134.6 L833.9,141.2 L847.1,146.8 L862.2,151.9 L877.3,155.3 L890.6,156.8 L900,157.8" stroke="#128a1c" stroke-width="1.3" fill="none"/>
<path d="M310,322 L325.4,342 L336,355.7 L355.3,379.9 L371,372.6 L387.9,389.5 L412.1,425.7 L432.1,411.3 L456.8,419.2 L471.3,415.4 L478.5,391.2 L505.1,466 L533.4,425.5 L552.8,375.3 L571.9,356.2 L582,333.5 L599.4,300.4 L613,323 L619,324.4 L628.4,332 L641,311 L663.5,289.7 L680.4,312.6 L708.1,342.2 L716,331.6 L730,321 L744,299.6 L759,297.6 L776.3,243.1 L802.5,247.4 L806.9,239.6 L843.8,264.8 L851.6,278.2 L861.6,268.1 L872.8,212.8 L880.6,212.3 L896.2,197.8 L900,201.2" stroke="#f03030" stroke-width="1.2" fill="none"/>
<ellipse cx="389.3" cy="314.7" rx="1.5" ry="2.6" transform="rotate(20 389.3 314.7)" fill="none" stroke="#0a800a" stroke-width="1.1"/>
<ellipse cx="490.4" cy="319.7" rx="1.5" ry="2.6" transform="rotate(20 490.4 319.7)" fill="none" stroke="#0a800a" stroke-width="1.1"/>
<ellipse cx="579.2" cy="282.4" rx="1.5" ry="2.6" transform="rotate(20 579.2 282.4)" fill="none" stroke="#0a800a" stroke-width="1.1"/>
<ellipse cx="681.5" cy="239.4" rx="1.5" ry="2.6" transform="rotate(20 681.5 239.4)" fill="none" stroke="#0a800a" stroke-width="1.1"/>
<ellipse cx="774.4" cy="136.4" rx="1.5" ry="2.6" transform="rotate(20 774.4 136.4)" fill="none" stroke="#0a800a" stroke-width="1.1"/>
<ellipse cx="867.9" cy="156.3" rx="1.5" ry="2.6" transform="rotate(20 867.9 156.3)" fill="none" stroke="#0a800a" stroke-width="1.1"/>
<path d="M396.2,402.3 L389.2,403.4 M396.2,402.3 L391.4,406.4" stroke="#f03030" stroke-width="1.1" fill="none"/>
<path d="M490.4,430.1 L484.2,430.3 M490.4,430.1 L485.3,433.7" stroke="#f03030" stroke-width="1.1" fill="none"/>
<path d="M578.1,342.5 L584,343.4 M578.1,342.5 L582.6,347.3" stroke="#f03030" stroke-width="1.1" fill="none"/>
<path d="M680.4,312.6 L673.6,313.5 M680.4,312.6 L675.7,316.7" stroke="#f03030" stroke-width="1.1" fill="none"/>
<path d="M770,262.5 L776.7,263.2 M770,262.5 L774.8,266.8" stroke="#f03030" stroke-width="1.1" fill="none"/>
<path d="M867.3,241.1 L873.9,241.4 M867.3,241.1 L872.5,245.3" stroke="#f03030" stroke-width="1.1" fill="none"/>
</g>
<text x="48.0" y="464.1" font-size="12" fill="#000" text-anchor="end">-4</text>
<text x="48.0" y="447.8" font-size="12" fill="#000" text-anchor="end">-3</text>
<text x="48.0" y="431.4" font-size="12" fill="#000" text-anchor="end">-2</text>
<text x="48.0" y="415.1" font-size="12" fill="#000" text-anchor="end">-1</text>
<text x="48.0" y="398.7" font-size="12" fill="#000" text-anchor="end">0</text>
<text x="48.0" y="382.3" font-size="12" fill="#000" text-anchor="end">1</text>
<text x="48.0" y="366.0" font-size="12" fill="#000" text-anchor="end">2</text>
<text x="48.0" y="349.6" font-size="12" fill="#000" text-anchor="end">3</text>
<text x="48.0" y="333.3" font-size="12" fill="#000" text-anchor="end">4</text>
<text x="48.0" y="316.9" font-size="12" fill="#000" text-anchor="end">5</text>
<text x="48.0" y="300.6" font-size="12" fill="#000" text-anchor="end">6</text>
<text x="48.0" y="284.2" font-size="12" fill="#000" text-anchor="end">7</text>
<text x="48.0" y="267.9" font-size="12" fill="#000" text-anchor="end">8</text>
<text x="48.0" y="251.5" font-size="12" fill="#000" text-anchor="end">9</text>
<text x="48.0" y="235.2" font-size="12" fill="#000" text-anchor="end">10</text>
<text x="48.0" y="218.8" font-size="12" fill="#000" text-anchor="end">11</text>
<text x="48.0" y="202.5" font-size="12" fill="#000" text-anchor="end">12</text>
<text x="48.0" y="186.1" font-size="12" fill="#000" text-anchor="end">13</text>
<text x="48.0" y="169.8" font-size="12" fill="#000" text-anchor="end">14</text>
<text x="48.0" y="153.4" font-size="12" fill="#000" text-anchor="end">15</text>
<text x="48.0" y="137.1" font-size="12" fill="#000" text-anchor="end">16</text>
<text x="48.0" y="120.7" font-size="12" fill="#000" text-anchor="end">17</text>
<text x="48.0" y="104.4" font-size="12" fill="#000" text-anchor="end">18</text>
<text x="48.0" y="88.0" font-size="12" fill="#000" text-anchor="end">19</text>
<text x="79.3" y="510.0" font-size="12" fill="#000" text-anchor="middle">-50</text>
<text x="120.3" y="510.0" font-size="12" fill="#000" text-anchor="middle">-25</text>
<text x="161.3" y="510.0" font-size="12" fill="#000" text-anchor="middle">0</text>
<text x="202.3" y="510.0" font-size="12" fill="#000" text-anchor="middle">25</text>
<text x="243.4" y="510.0" font-size="12" fill="#000" text-anchor="middle">50</text>
<text x="284.4" y="510.0" font-size="12" fill="#000" text-anchor="middle">75</text>
<text x="325.4" y="510.0" font-size="12" fill="#000" text-anchor="middle">100</text>
<text x="366.4" y="510.0" font-size="12" fill="#000" text-anchor="middle">125</text>
<text x="407.5" y="510.0" font-size="12" fill="#000" text-anchor="middle">150</text>
<text x="448.5" y="510.0" font-size="12" fill="#000" text-anchor="middle">175</text>
<text x="489.5" y="510.0" font-size="12" fill="#000" text-anchor="middle">200</text>
<text x="530.5" y="510.0" font-size="12" fill="#000" text-anchor="middle">225</text>
<text x="571.5" y="510.0" font-size="12" fill="#000" text-anchor="middle">250</text>
<text x="612.6" y="510.0" font-size="12" fill="#000" text-anchor="middle">275</text>
<text x="653.6" y="510.0" font-size="12" fill="#000" text-anchor="middle">300</text>
<text x="694.6" y="510.0" font-size="12" fill="#000" text-anchor="middle">325</text>
<text x="735.7" y="510.0" font-size="12" fill="#000" text-anchor="middle">350</text>
<text x="776.7" y="510.0" font-size="12" fill="#000" text-anchor="middle">375</text>
<text x="817.7" y="510.0" font-size="12" fill="#000" text-anchor="middle">400</text>
<text x="858.7" y="510.0" font-size="12" fill="#000" text-anchor="middle">425</text>
<text x="57.9" y="502.4" font-size="10" fill="#333" text-anchor="start" textLength="96.6" lengthAdjust="spacingAndGlyphs">Pinnan korkeus 1,2</text>
<text transform="translate(159.3,491.5) rotate(-90)" x="0" y="0" font-size="12" fill="#14901e" stroke="#14901e" stroke-width="0.25" textLength="21.4" lengthAdjust="spacingAndGlyphs">8.79</text>
<text transform="translate(171.8,491.5) rotate(-90)" x="0" y="0" font-size="12" fill="#ff1a1a" stroke="#ff1a1a" stroke-width="0.25" textLength="21.4" lengthAdjust="spacingAndGlyphs">4.45</text>
<text transform="translate(241.4,491.5) rotate(-90)" x="0" y="0" font-size="12" fill="#14901e" stroke="#14901e" stroke-width="0.25" textLength="21.4" lengthAdjust="spacingAndGlyphs">7.56</text>
<text transform="translate(253.9,491.5) rotate(-90)" x="0" y="0" font-size="12" fill="#ff1a1a" stroke="#ff1a1a" stroke-width="0.25" textLength="21.4" lengthAdjust="spacingAndGlyphs">4.26</text>
<text transform="translate(323.4,491.5) rotate(-90)" x="0" y="0" font-size="12" fill="#14901e" stroke="#14901e" stroke-width="0.25" textLength="21.4" lengthAdjust="spacingAndGlyphs">6.66</text>
<text transform="translate(335.9,491.5) rotate(-90)" x="0" y="0" font-size="12" fill="#ff1a1a" stroke="#ff1a1a" stroke-width="0.25" textLength="21.4" lengthAdjust="spacingAndGlyphs">3.21</text>
<text transform="translate(405.5,491.5) rotate(-90)" x="0" y="0" font-size="12" fill="#14901e" stroke="#14901e" stroke-width="0.25" textLength="21.4" lengthAdjust="spacingAndGlyphs">4.92</text>
<text transform="translate(418.0,491.5) rotate(-90)" x="0" y="0" font-size="12" fill="#ff1a1a" stroke="#ff1a1a" stroke-width="0.25" textLength="25.0" lengthAdjust="spacingAndGlyphs">-1.48</text>
<text transform="translate(487.5,491.5) rotate(-90)" x="0" y="0" font-size="12" fill="#14901e" stroke="#14901e" stroke-width="0.25" textLength="21.4" lengthAdjust="spacingAndGlyphs">4.77</text>
<text transform="translate(500.0,491.5) rotate(-90)" x="0" y="0" font-size="12" fill="#ff1a1a" stroke="#ff1a1a" stroke-width="0.25" textLength="25.0" lengthAdjust="spacingAndGlyphs">-1.86</text>
<text transform="translate(569.5,491.5) rotate(-90)" x="0" y="0" font-size="12" fill="#14901e" stroke="#14901e" stroke-width="0.25" textLength="21.4" lengthAdjust="spacingAndGlyphs">6.81</text>
<text transform="translate(582.0,491.5) rotate(-90)" x="0" y="0" font-size="12" fill="#ff1a1a" stroke="#ff1a1a" stroke-width="0.25" textLength="21.4" lengthAdjust="spacingAndGlyphs">2.34</text>
<text transform="translate(651.6,491.5) rotate(-90)" x="0" y="0" font-size="12" fill="#14901e" stroke="#14901e" stroke-width="0.25" textLength="21.4" lengthAdjust="spacingAndGlyphs">8.69</text>
<text transform="translate(664.1,491.5) rotate(-90)" x="0" y="0" font-size="12" fill="#ff1a1a" stroke="#ff1a1a" stroke-width="0.25" textLength="21.4" lengthAdjust="spacingAndGlyphs">5.76</text>
<text transform="translate(733.7,491.5) rotate(-90)" x="0" y="0" font-size="12" fill="#14901e" stroke="#14901e" stroke-width="0.25" textLength="27.5" lengthAdjust="spacingAndGlyphs">13.68</text>
<text transform="translate(746.2,491.5) rotate(-90)" x="0" y="0" font-size="12" fill="#ff1a1a" stroke="#ff1a1a" stroke-width="0.25" textLength="21.4" lengthAdjust="spacingAndGlyphs">4.98</text>
<text transform="translate(815.7,491.5) rotate(-90)" x="0" y="0" font-size="12" fill="#14901e" stroke="#14901e" stroke-width="0.25" textLength="27.5" lengthAdjust="spacingAndGlyphs">15.97</text>
<text transform="translate(828.2,491.5) rotate(-90)" x="0" y="0" font-size="12" fill="#ff1a1a" stroke="#ff1a1a" stroke-width="0.25" textLength="21.4" lengthAdjust="spacingAndGlyphs">9.16</text>
<rect x="111" y="110" width="225" height="302" fill="#f0f0f0"/>
<rect x="111.5" y="110.5" width="224" height="301" fill="none" stroke="#4d9de6" stroke-width="1"/>
<rect x="111" y="110" width="225" height="19" fill="#0078d7"/>
<text x="116.9" y="122.4" font-size="8.2" fill="#ffffff" text-anchor="start" textLength="47.9" lengthAdjust="spacingAndGlyphs">Massalaskenta</text>
<path d="M322.8 116 L329 122.2 M329 116 L322.8 122.2" stroke="#fff" stroke-width="1"/>
<rect x="116.5" y="134.5" width="168.8" height="51.7" fill="none" stroke="#a0a0a0" stroke-width="1"/>
<rect x="117.5" y="135.5" width="166.8" height="49.7" fill="none" stroke="#ffffff" stroke-width="0.6" opacity="0.6"/>
<rect x="116.5" y="192" width="168.8" height="47.0" fill="none" stroke="#a0a0a0" stroke-width="1"/>
<rect x="117.5" y="193" width="166.8" height="45.0" fill="none" stroke="#ffffff" stroke-width="0.6" opacity="0.6"/>
<rect x="116.5" y="245" width="168.8" height="47.5" fill="none" stroke="#a0a0a0" stroke-width="1"/>
<rect x="117.5" y="246" width="166.8" height="45.5" fill="none" stroke="#ffffff" stroke-width="0.6" opacity="0.6"/>
<rect x="116.5" y="298.5" width="168.8" height="109.1" fill="none" stroke="#a0a0a0" stroke-width="1"/>
<rect x="117.5" y="299.5" width="166.8" height="107.1" fill="none" stroke="#ffffff" stroke-width="0.6" opacity="0.6"/>
<rect x="165.6" y="137.9" width="36.8" height="11.3" fill="#ffffff" stroke="#7a7a7a" stroke-width="1"/>
<text x="168.4" y="146.4" font-size="7.6" fill="#303030" text-anchor="start" textLength="13.6" lengthAdjust="spacingAndGlyphs">0.00</text>
<rect x="165.6" y="154.6" width="36.8" height="11.6" fill="#ffffff" stroke="#7a7a7a" stroke-width="1"/>
<text x="168.4" y="162.8" font-size="7.6" fill="#303030" text-anchor="start" textLength="21.7" lengthAdjust="spacingAndGlyphs">475.32</text>
<rect x="165.6" y="170.8" width="100.7" height="12.3" fill="#ffffff" stroke="#7a7a7a" stroke-width="1"/>
<text x="168.7" y="179.5" font-size="7.6" fill="#303030" text-anchor="start">*</text>
<path d="M258.5 175.5 L261.5 178.5 L264.5 175.5" stroke="#333" stroke-width="0.8" fill="none"/>
<rect x="271.7" y="171.7" width="9.6" height="9.6" fill="#e1e1e1" stroke="#adadad" stroke-width="1"/>
<text x="273.2" y="180.0" font-size="7.6" fill="#222" text-anchor="start" textLength="6.5" lengthAdjust="spacingAndGlyphs">...</text>
<text x="119.2" y="148.6" font-size="7.6" fill="#303030" text-anchor="start" textLength="28.9" lengthAdjust="spacingAndGlyphs">Alkupaalu</text>
<text x="119.2" y="165.0" font-size="7.6" fill="#303030" text-anchor="start" textLength="34.8" lengthAdjust="spacingAndGlyphs">Loppupaalu</text>
<text x="119.2" y="181.4" font-size="7.6" fill="#303030" text-anchor="start" textLength="21.5" lengthAdjust="spacingAndGlyphs">Massat</text>
<rect x="210.5" y="142.7" width="7.8" height="6.8" fill="#ffffff" stroke="#333333" stroke-width="1"/>
<path d="M211.8 146.4 L213.5 148.4 L217.0 144.0" stroke="#222" stroke-width="0.9" fill="none"/>
<text x="220.5" y="148.5" font-size="7.6" fill="#303030" text-anchor="start" textLength="38.5" lengthAdjust="spacingAndGlyphs">Jatka pintoja</text>
<rect x="210.5" y="158.7" width="7.8" height="7.3" fill="#ffffff" stroke="#333333" stroke-width="1"/>
<text x="220.5" y="164.8" font-size="7.6" fill="#303030" text-anchor="start" textLength="52.0" lengthAdjust="spacingAndGlyphs">Kanaalikeskiarvot</text>
<text x="118.9" y="206.1" font-size="7.6" fill="#303030" text-anchor="start" textLength="23.1" lengthAdjust="spacingAndGlyphs">m³-raja</text>
<rect x="165.6" y="195.8" width="36.8" height="11.5" fill="#ffffff" stroke="#7a7a7a" stroke-width="1"/>
<text x="168.9" y="203.9" font-size="7.6" fill="#303030" text-anchor="start" textLength="9.2" lengthAdjust="spacingAndGlyphs">1.0</text>
<path d="M194.0 199.9 L197.0 202.9 L200.0 199.9" stroke="#333" stroke-width="0.8" fill="none"/>
<text x="206.0" y="205.8" font-size="7.6" fill="#303030" text-anchor="start" textLength="29.8" lengthAdjust="spacingAndGlyphs">Kaltevuus</text>
<rect x="244.7" y="195.7" width="37.0" height="11.6" fill="#ffffff" stroke="#7a7a7a" stroke-width="1"/>
<text x="248.2" y="203.5" font-size="7.6" fill="#303030" text-anchor="start" textLength="10.0" lengthAdjust="spacingAndGlyphs">5.1</text>
<path d="M273.5 199.9 L276.5 202.9 L279.5 199.9" stroke="#333" stroke-width="0.8" fill="none"/>
<rect x="119.7" y="216.3" width="7.6" height="7.0" fill="#ffffff" stroke="#333333" stroke-width="1"/>
<text x="128.9" y="222.4" font-size="7.6" fill="#303030" text-anchor="start" textLength="20.9" lengthAdjust="spacingAndGlyphs">Rajaus</text>
<rect x="165.6" y="211.8" width="116.1" height="12.3" fill="#e3e3e3" stroke="#d5d5d5" stroke-width="1"/>
<text x="167.0" y="220.9" font-size="7.6" fill="#303030" text-anchor="start" textLength="31.9" lengthAdjust="spacingAndGlyphs">Ei rajausta</text>
<path d="M273.5 216.7 L276.5 219.7 L279.5 216.7" stroke="#333" stroke-width="0.8" fill="none"/>
<rect x="119.7" y="228.3" width="7.6" height="6.8" fill="#ffffff" stroke="#333333" stroke-width="1"/>
<text x="128.9" y="234.7" font-size="7.6" fill="#303030" text-anchor="start" textLength="27.0" lengthAdjust="spacingAndGlyphs">Ulkopuoli</text>
<rect x="206.7" y="228.0" width="7.6" height="7.0" fill="#ffffff" stroke="#333333" stroke-width="1"/>
<text x="216.2" y="234.2" font-size="7.6" fill="#303030" text-anchor="start" textLength="63.8" lengthAdjust="spacingAndGlyphs">Massat rajausviivoille</text>
<text x="118.9" y="258.9" font-size="7.6" fill="#303030" text-anchor="start" textLength="26.7" lengthAdjust="spacingAndGlyphs">Paaluväli</text>
<rect x="165.6" y="249.9" width="36.5" height="11.8" fill="#ffffff" stroke="#7a7a7a" stroke-width="1"/>
<text x="168.7" y="258.1" font-size="7.6" fill="#303030" text-anchor="start" textLength="13.5" lengthAdjust="spacingAndGlyphs">20.0</text>
<path d="M194.0 254.3 L197.0 257.3 L200.0 254.3" stroke="#333" stroke-width="0.8" fill="none"/>
<text x="206.1" y="258.9" font-size="7.6" fill="#303030" text-anchor="start" textLength="30.5" lengthAdjust="spacingAndGlyphs">Desimaalit</text>
<rect x="244.7" y="249.8" width="37.1" height="12.1" fill="#ffffff" stroke="#7a7a7a" stroke-width="1"/>
<text x="247.9" y="257.8" font-size="7.6" fill="#303030" text-anchor="start">0</text>
<path d="M273.5 254.3 L276.5 257.3 L279.5 254.3" stroke="#333" stroke-width="0.8" fill="none"/>
<rect x="119.7" y="268.9" width="7.6" height="7.2" fill="#ffffff" stroke="#333333" stroke-width="1"/>
<text x="128.9" y="275.6" font-size="7.6" fill="#303030" text-anchor="start" textLength="33.7" lengthAdjust="spacingAndGlyphs">Välisummat</text>
<rect x="119.7" y="281.6" width="7.6" height="7.1" fill="#ffffff" stroke="#333333" stroke-width="1"/>
<text x="128.9" y="288.1" font-size="7.6" fill="#303030" text-anchor="start" textLength="41.8" lengthAdjust="spacingAndGlyphs">Vinopinta-alat</text>
<rect x="206.8" y="269.3" width="7.5" height="7.0" fill="#ffffff" stroke="#333333" stroke-width="1"/>
<path d="M208.1 273.0 L209.8 275.0 L213.3 270.6" stroke="#222" stroke-width="0.9" fill="none"/>
<text x="216.6" y="275.5" font-size="7.6" fill="#303030" text-anchor="start" textLength="45.3" lengthAdjust="spacingAndGlyphs">Taulukkomuoto</text>
<rect x="206.8" y="281.6" width="7.5" height="7.4" fill="#ffffff" stroke="#333333" stroke-width="1"/>
<path d="M208.1 285.3 L209.8 287.3 L213.3 282.9" stroke="#222" stroke-width="0.9" fill="none"/>
<text x="216.6" y="288.0" font-size="7.6" fill="#303030" text-anchor="start" textLength="50.4" lengthAdjust="spacingAndGlyphs">Alueet eriteltynä</text>
<text x="119.0" y="308.6" font-size="7.6" fill="#303030" text-anchor="start" textLength="15.0" lengthAdjust="spacingAndGlyphs">Pinta</text>
<text x="206.0" y="308.6" font-size="7.6" fill="#303030" text-anchor="start" textLength="27.0" lengthAdjust="spacingAndGlyphs">Pinta-ala</text>
<text x="257.6" y="308.6" font-size="7.6" fill="#303030" text-anchor="start" textLength="24.4" lengthAdjust="spacingAndGlyphs">Tilavuus</text>
<text x="119.0" y="324.6" font-size="7.6" fill="#303030" text-anchor="start" textLength="25.0" lengthAdjust="spacingAndGlyphs">Leikkaus</text>
<text x="211.6" y="324.6" font-size="7.6" fill="#303030" text-anchor="start" textLength="21.4" lengthAdjust="spacingAndGlyphs">474 m²</text>
<text x="257.0" y="324.6" font-size="7.6" fill="#303030" text-anchor="start" textLength="25.0" lengthAdjust="spacingAndGlyphs">2448 m³</text>
<rect x="291.5" y="135.4" width="38.3" height="9.1" fill="#e1e1e1" stroke="#0078d7" stroke-width="2"/>
<text x="299.8" y="142.6" font-size="7.6" fill="#303030" text-anchor="start" textLength="21.2" lengthAdjust="spacingAndGlyphs">Suorita</text>
<rect x="291.0" y="151.6" width="39.3" height="9.8" fill="#e1e1e1" stroke="#adadad" stroke-width="1"/>
<text x="302.8" y="158.7" font-size="7.6" fill="#303030" text-anchor="start" textLength="14.5" lengthAdjust="spacingAndGlyphs">Sulje</text>
<rect x="291.0" y="167.7" width="39.3" height="10.1" fill="#e1e1e1" stroke="#adadad" stroke-width="1"/>
<text x="300.0" y="175.2" font-size="7.6" fill="#303030" text-anchor="start" textLength="21.0" lengthAdjust="spacingAndGlyphs">Ohje *</text>
<rect x="290.7" y="380.7" width="39.7" height="10.4" fill="#e1e1e1" stroke="#adadad" stroke-width="1"/>
<text x="300.8" y="388.6" font-size="7.6" fill="#303030" text-anchor="start" textLength="19.2" lengthAdjust="spacingAndGlyphs">Pinnat</text>
<rect x="290.7" y="397.4" width="39.7" height="9.9" fill="#e1e1e1" stroke="#adadad" stroke-width="1"/>
<text x="298.2" y="404.5" font-size="7.6" fill="#303030" text-anchor="start" textLength="24.5" lengthAdjust="spacingAndGlyphs">Näytä *</text>
<rect x="232.0" y="521" width="1" height="16" fill="#a0a0a0"/>
<rect x="383.5" y="521" width="1" height="16" fill="#a0a0a0"/>
<rect x="647.7" y="521" width="1" height="16" fill="#a0a0a0"/>
<rect x="786.3" y="521" width="1" height="16" fill="#a0a0a0"/>
<text x="6.2" y="533.8" font-size="12" fill="#111" text-anchor="start" textLength="109.4" lengthAdjust="spacingAndGlyphs">A=342.697  Z=15.228</text>
<text x="239.6" y="533.8" font-size="12" fill="#111" text-anchor="start" textLength="52.0" lengthAdjust="spacingAndGlyphs">Ryhmä: 0+</text>
<text x="390.3" y="533.8" font-size="12" fill="#111" text-anchor="start" textLength="220.6" lengthAdjust="spacingAndGlyphs">Hakutapa: Lähin piste (Samat pisteet, Tekstit)</text>
<text x="654.5" y="533.8" font-size="12" fill="#111" text-anchor="start" textLength="101.7" lengthAdjust="spacingAndGlyphs">Zoom: AZ  /  Kulmat</text>
<text x="793.2" y="533.8" font-size="12" fill="#111" text-anchor="start" textLength="86.1" lengthAdjust="spacingAndGlyphs">Maski ei käytössä</text>
</svg></body></html>
